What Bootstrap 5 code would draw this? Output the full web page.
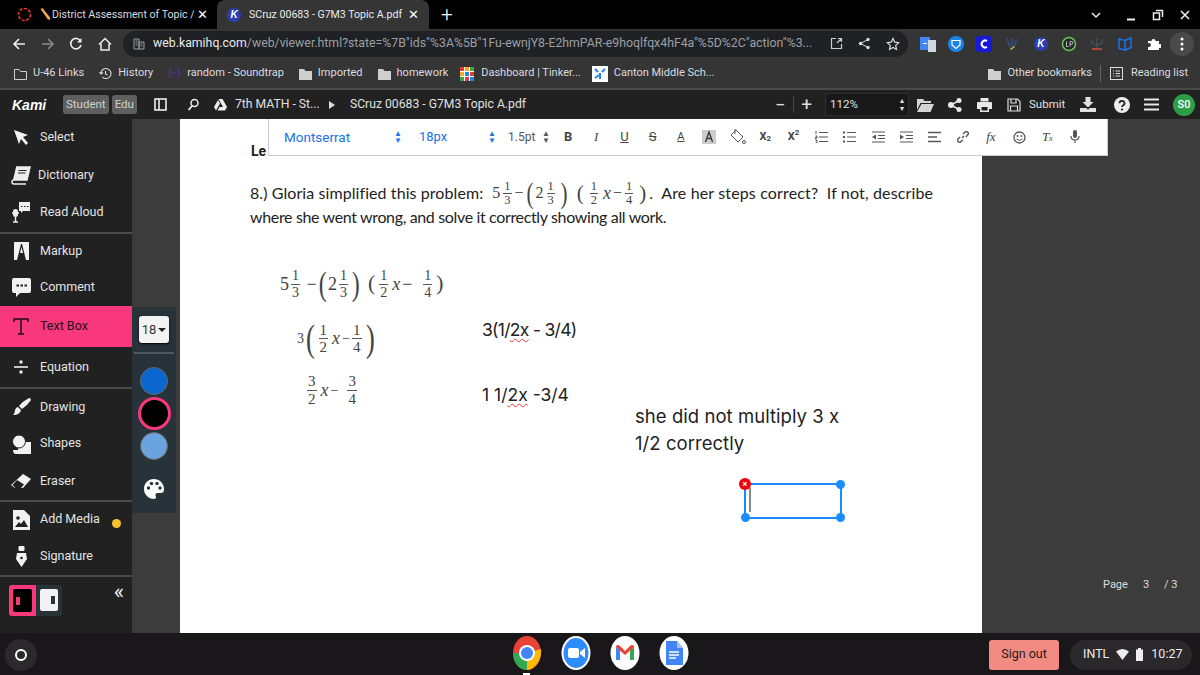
<!DOCTYPE html>
<html lang="en">
<head>
  <meta charset="UTF-8">
  <title>SCruz 00683 - G7M3 Topic A.pdf</title>
  <link rel="stylesheet" href="https://cdn.jsdelivr.net/npm/bootstrap@5.3.3/dist/css/bootstrap.min.css">
  <style>
    html, body { width: 1200px; height: 675px; overflow: hidden; margin: 0; background: #000; }
    body { font-family: Roboto, "Liberation Sans", sans-serif; }
    svg { display: block; flex: none; }

    /* small left margins for the icon rows */
    .ml-5 { margin-left: 5px; } .ml-7 { margin-left: 7px; } .ml-8 { margin-left: 8px; } .ml-9 { margin-left: 9px; }
    .ml-10 { margin-left: 10px; } .ml-12 { margin-left: 12px; } .ml-14 { margin-left: 14px; } .ml-15 { margin-left: 15px; }
    .ml-18 { margin-left: 18px; } .ml-20 { margin-left: 20px; }

    /* tab strip */
    .tabstrip { height: 29px; background: #000; color: #dadce0; font-size: 10.600px; }
    .tab-off { width: 217px; padding-left: 17px; }
    .tab-on { width: 212px; height: 29px; padding-left: 10px; background: #353535; border-radius: 8px 8px 0 0; color: #e8eaed; }
    .tab-close { color: #fff; font-size: 13px; line-height: 1; }
    .tab-off .tab-close { margin-left: auto; margin-right: 9px; }
    .tab-title { white-space: nowrap; overflow: hidden; flex: none; }
    .title-off { width: 142px; margin-left: 1px; }
    .title-on { width: 154px; margin-left: 8px; margin-right: 5px; }
    .k-dot { width: 14px; height: 14px; border-radius: 50%; background: #2b3fb0; color: #fff; font: italic 700 10px/14px "Liberation Sans", sans-serif; text-align: center; flex: none; }
    .new-tab { color: #fff; font-size: 21px; font-weight: 300; line-height: 1; margin-left: 12px; }
    .win-btns { margin-left: auto; padding-right: 9px; gap: 15px; }

    /* address bar */
    .omnibar { height: 29px; background: #353535; padding-left: 12px; }
    .nav-icons { width: 111px; gap: 14.500px; }
    .addr { width: 785px; height: 26px; background: #202124; border-radius: 13px; padding: 0 8px 0 10px; font-size: 12.300px; color: #9aa0a6; white-space: nowrap; }
    .addr b { font-weight: 400; color: #e8eaed; }
    .addr-text { width: 664px; overflow: hidden; margin-left: 8px; }
    .ext-icons { margin-left: 6px; flex: 1; }
    .ext-slot { width: 28.200px; display: flex; justify-content: center; align-items: center; height: 24px; }
    .dots-round { width: 24px; height: 24px; border-radius: 50%; background: #4a4a4a; }

    /* bookmarks */
    .bookmarks { height: 32px; padding: 1px 12px 0 14px; background: #353535; border-bottom: 2px solid #4a4a4a; color: #dadce0; font-size: 11px; white-space: nowrap; }
    .bm-item { display: flex; align-items: center; gap: 6px; margin-right: 15px; }
    .bm-item.before-tight { margin-right: 12px; }
    .bm-item.tight { margin-right: 11px; gap: 7px; }
    .bm-end { margin-left: auto; margin-right: 0; }
    .bm-sep { width: 1px; height: 17px; background: #666; margin: 0 9px 0 8px; }
    .sound-ico { color: #5a2ca0; font-size: 11px; font-weight: 700; width: 13px; }

    /* kami top bar */
    .kamibar { height: 29px; background: #212121; color: #e0e0e0; font-size: 12.200px; white-space: nowrap; position: relative; z-index: 3; }
    .kami-logo { width: 63px; padding-left: 12px; font: italic 700 14px "Liberation Sans", sans-serif; color: #fff; }
    .plan-tag { background: #5f5f5f; color: #d0d0d0; border-radius: 3px; font-size: 11.500px; padding: 2px 3px; line-height: 15px; margin-right: 3px; }
    .crumb { margin-left: 8px; width: 85px; }
    .crumb-arrow { margin-left: 9px; }
    .kami-right { margin-left: auto; padding-right: 5px; }
    .zoom-minus { font-size: 18px; line-height: 1; margin-right: 8px; }
    .zoom-sep { width: 1px; height: 17px; background: #444; margin-right: 7px; }
    .zoom-plus { font-size: 19px; line-height: 1; margin-right: 13px; }
    .zoom-box { width: 84px; height: 23px; background: #191919; border: 1px solid #2e2e2e; padding: 0 4px; font-size: 11.500px; }
    .spin { font-size: 8px; line-height: .9; text-align: center; }
    .submit-lbl { margin-left: 8px; font-size: 11.500px; width: 46px; }
    .avatar { width: 22px; height: 22px; border-radius: 50%; background: #2e9e46; color: #fff; font-size: 11px; font-weight: 500; text-align: center; line-height: 22px; margin-left: 14px; }

    /* tool rail */
    .workarea { height: 514px; position: relative; background: #3c3c3c; }
    .tool-rail { width: 132px; background: #212121; color: #e4e4e4; font-size: 12.500px; flex: none; }
    .tool-row { height: 37.500px; display: flex; align-items: center; position: relative; }
    .tool-ico { width: 40px; display: flex; justify-content: center; padding-left: 2px; }
    .tool-row.on { height: 41px; background: #f8387a; color: #26111a; }
    .tool-row.eq { height: 40px; }
    .tool-row.markup-row { height: 37px; }
    .tool-row.draw { height: 38px; }
    .tool-row.media { height: 37px; }
    .tool-row.sign { height: 38px; }
    .tool-line { border-top: 2px solid #4c4c4c; }
    .dict-lbl { margin-left: -2px; }
    .media-dot { position: absolute; left: 112px; top: 17px; width: 9px; height: 9px; border-radius: 50%; background: #fbc02d; }
    .rail-foot { padding: 8px 8px 0 9px; }
    .view-tog { width: 53px; height: 31px; background: #283339; border-radius: 3px; }
    .view-a { width: 27px; height: 31px; background: #f8387a; padding: 4px; border-radius: 3px 0 0 3px; }
    .view-a i { display: flex; align-items: center; width: 100%; height: 100%; background: #000; border-radius: 2px; padding-left: 3px; }
    .view-a i::before { content: ""; width: 4px; height: 8px; background: #f8387a; }
    .view-b { width: 18px; height: 22px; margin: 4px 0 0 4px; background: #f2f2f2; border-radius: 2px; display: flex; align-items: center; justify-content: flex-end; padding-right: 3px; }
    .view-b::before { content: ""; width: 4px; height: 8px; background: #283339; }
    .collapse-arrows { color: #eee; font-size: 22px; line-height: 1; margin: -4px 0 0 auto; }

    /* colour panel */
    .color-panel { width: 44px; height: 206px; margin-top: 188px; background: #283339; flex: none; }
    .size-pick { width: 30px; height: 27px; margin: 9px auto 0; background: #f3f3f3; border-radius: 3px; color: #333; font-size: 13px; gap: 2px; box-shadow: 0 1px 2px #000; }
    .size-pick::after { content: ""; border: 4px solid transparent; border-top: 4px solid #222; border-bottom: 0; }
    .panel-sep { height: 2px; background: #4e5a60; margin: 9px 2px 13px; }
    .swatch { width: 28px; height: 28px; border-radius: 50%; border: 1px solid #666; margin: 0 auto 4px; }
    .swatch-sel { width: 33px; height: 33px; background: #000; border: 3px solid #f8387a; margin-bottom: 2px; margin-top: -2px; }
    .sw-blue { background: #0b66d0; }
    .sw-light { background: #6aa3e0; }
    .palette-ico { margin: 19px auto 0; }

    /* pdf page, free canvas */
    .pdf-page { width: 802px; margin-left: 4px; background: #fff; position: relative; color: #222; flex: none; }
    .side-right { flex: 1; color: #ddd; font-size: 11px; position: relative; }
    .page-count { position: absolute; top: 458px; left: 121px; display: flex; gap: 15px; }

    .fmt-bar { position: absolute; left: 88px; top: 0; width: 840px; height: 37px; background: #fff; border: 1px solid #ccc; border-top: 0; color: #555; font-size: 12px; z-index: 2; padding-left: 15px; }
    .fmt-pick { color: #1a73e8; font-size: 13.500px; }
    .fmt-pick.spin { font-size: 8px; }
    .w-font { width: 110px; }
    .w-a1 { width: 25px; }
    .w-size { width: 69px; font-size: 13px; }
    .w-a2 { width: 20px; }
    .w-pt { width: 34px; }
    .w-a3 { width: 12px; }
    .fmt-btn { width: 28.200px; display: flex; justify-content: center; align-items: center; font-size: 13px; color: #444; flex: none; }
    .f-b { font-weight: 700; }
    .f-serif { font-family: "Liberation Serif", serif; font-style: italic; }
    .f-sm { font-size: 11px; }
    .f-smb { font-size: 11px; font-weight: 700; }
    .f-sub { font-size: 8px; }

    .note { position: absolute; white-space: nowrap; }
    .note-text { font-family: Inter, "Open Sans", sans-serif; font-size: 17.500px; color: #222; line-height: 27px; }
    .spell { text-decoration: underline wavy #e33 1px; text-underline-offset: 2px; }
    .q-text { font-family: Lato, "Open Sans", sans-serif; font-size: 16px; line-height: 24px; color: #222; }
    .q1 { left: 70px; top: 62px; display: flex; align-items: center; letter-spacing: .08px; }
    .q2 { left: 70px; top: 86px; letter-spacing: -.35px; }
    .q-math { color: #222; margin: 0 0 0 9px; font-size: 20px; letter-spacing: 0; height: 24px; }
    .q-math .frac { font-size: 12.500px; line-height: 1; margin: 0 3px; }
    .q-math .paren { font-size: 30px; margin: 0 1px; }
    .q-math .paren-s { font-size: 21px; margin: 0 3px; }
    .q-after { letter-spacing: .15px; white-space: pre; }
    .le { left: 71px; top: 22px; font-weight: 700; font-size: 14px; color: #222; }

    .math { font-family: "Liberation Serif", serif; color: #444; display: inline-flex; align-items: center; font-size: 16px; }
    .math em { font-size: 18px; margin: 0 2px; }
    .frac { display: inline-flex; flex-direction: column; align-items: center; font-size: .78em; line-height: 1.120; margin: 0 2px; }
    .frac > span:first-child { border-bottom: 1px solid #555; padding: 0 1px; }
    .frac-big { font-size: 15px; }
    .paren { font-size: 1.900em; font-weight: 300; line-height: 1; transform: scaleX(.7); }
    .paren-s { font-size: 1.200em; line-height: 1; margin: 0 2px; }
    .paren-xl { font-size: 2.700em; }
    .m1 { left: 100px; top: 148px; font-size: 18px; }
    .m2 { left: 117px; top: 201px; font-size: 14px; }
    .m3 { left: 125px; top: 254px; font-size: 14px; }
    .n1 { left: 302px; top: 197px; letter-spacing: -.7px; }
    .n2 { left: 302px; top: 262px; }
    .n3 { left: 455px; top: 284px; font-size: 18.500px; letter-spacing: .05px; }

    .sel-box { left: 564px; top: 364px; width: 98px; height: 36px; border: 2px solid #1a8cff; }
    .sel-h { position: absolute; width: 9px; height: 9px; background: #1a8cff; border-radius: 50%; }
    .h-tr { right: -5px; top: -5px; }
    .h-bl { left: -5px; bottom: -5px; }
    .h-br { right: -5px; bottom: -5px; }
    .sel-x { position: absolute; left: -7px; top: -7px; width: 12px; height: 12px; border-radius: 50%; background: #f3000f; color: #fff; font-size: 9px; line-height: 12px; text-align: center; font-weight: 700; }
    .caret-line { position: absolute; left: 3px; top: 2px; width: 2px; height: 25px; background: #888; }

    /* shelf */
    .shelf { height: 43px; background: #1a171a; position: relative; color: #e8eaed; font-size: 12.500px; }
    .launcher { width: 32px; height: 32px; border-radius: 50%; background: #2c292c; margin-left: 5px; flex: none; }
    .launcher::after { content: ""; width: 12px; height: 12px; border: 2px solid #fff; border-radius: 50%; }
    .shelf-apps { position: absolute; left: 507px; top: 2px; gap: 9px; }
    .shelf-ico { width: 40px; display: flex; justify-content: center; }
    .run-dot { position: absolute; left: 16px; top: 38px; width: 7px; height: 2px; background: #fff; }
    .sign-out { width: 70px; height: 30px; background: #f28b82; color: #2a1a1a; border-radius: 3px; margin-left: auto; }
    .tray { width: 122px; height: 30px; background: #2b282b; border-radius: 15px; margin: 0 8px 0 11px; padding-left: 13px; gap: 7px; }
    .tray-time { margin-left: 1px; }
  </style>
</head>
<body>
  <!-- tab strip -->
  <div class="tabstrip d-flex align-items-center">
    <div class="tab-off d-flex align-items-center">
      <svg width="15" height="15" viewBox="0 0 15 15"><circle cx="7.500" cy="7.500" r="6" fill="none" stroke="#e53935" stroke-width="1.600" stroke-dasharray="3 1.500"/></svg>
      <svg width="12" height="12" viewBox="0 0 11 12" class="ml-7"><path d="M1 1l2-1 8 10-1 2-2-1z" fill="#e7a94b"/></svg>
      <span class="tab-title title-off">District Assessment of Topic /</span>
      <span class="tab-close">✕</span>
    </div>
    <div class="tab-on d-flex align-items-center">
      <span class="k-dot">K</span>
      <span class="tab-title title-on">SCruz 00683 - G7M3 Topic A.pdf</span>
      <span class="tab-close">✕</span>
    </div>
    <span class="new-tab">+</span>
    <div class="win-btns d-flex align-items-center">
      <svg width="12" height="12" viewBox="0 0 12 12"><path d="M2 4l4 4 4-4" fill="none" stroke="#eee" stroke-width="1.500"/></svg>
      <svg width="12" height="12" viewBox="0 0 12 12" class="ms-2"><path d="M2 10.500h8" stroke="#eee" stroke-width="2"/></svg>
      <svg width="12" height="12" viewBox="0 0 12 12"><path d="M1.500 4h6v6.500h-6zM4 1.500h6.500V8" fill="none" stroke="#eee" stroke-width="1.500"/></svg>
      <svg width="12" height="12" viewBox="0 0 12 12"><path d="M2 2l8 8M10 2l-8 8" stroke="#eee" stroke-width="1.600"/></svg>
    </div>
  </div>

  <!-- address bar -->
  <div class="omnibar d-flex align-items-center">
    <div class="nav-icons d-flex align-items-center">
      <svg width="14" height="14" viewBox="0 0 14 14"><path d="M13 7H2M7 2L2 7l5 5" fill="none" stroke="#eee" stroke-width="1.600"/></svg>
      <svg width="14" height="14" viewBox="0 0 14 14"><path d="M1 7h11M7 2l5 5-5 5" fill="none" stroke="#8a8a8a" stroke-width="1.600"/></svg>
      <svg width="14" height="14" viewBox="0 0 14 14"><path d="M11.500 4A5.200 5.200 0 1 0 12 8" fill="none" stroke="#eee" stroke-width="1.600"/><path d="M12.500 1v4.500H8z" fill="#eee"/></svg>
      <svg width="14" height="14" viewBox="0 0 14 14"><path d="M1 7.500L7 1.500l6 6M3 6.500V13h8V6.500" fill="none" stroke="#eee" stroke-width="1.500"/></svg>
    </div>
    <div class="addr d-flex align-items-center">
      <svg width="12" height="12" viewBox="0 0 12 12"><path d="M1 1h5v10H1zM6 4h5v7H6z" fill="none" stroke="#9aa0a6"/><path d="M2.500 3h2M2.500 5h2M2.500 7h2M7.500 6h2M7.500 8h2" stroke="#9aa0a6"/></svg>
      <span class="addr-text"><b>web.kamihq.com</b>/web/viewer.html?state=%7B"ids"%3A%5B"1Fu-ewnjY8-E2hmPAR-e9hoqlfqx4hF4a"%5D%2C"action"%3...</span>
      <svg width="13" height="13" viewBox="0 0 13 13" class="ms-auto"><path d="M6 1.500H1.500v10h10V7M7 6l4.500-4.500M8 1.500h3.500V5" fill="none" stroke="#ccc" stroke-width="1.200"/></svg>
      <svg width="13" height="13" viewBox="0 0 13 13" class="ml-15"><circle cx="10" cy="2.500" r="1.700" fill="#ddd"/><circle cx="10" cy="10.500" r="1.700" fill="#ddd"/><circle cx="2.500" cy="6.500" r="1.700" fill="#ddd"/><path d="M10 2.500l-7.500 4 7.500 4" fill="none" stroke="#ddd"/></svg>
      <svg width="14" height="14" viewBox="0 0 14 14" class="ml-15"><path d="M7 1.500l1.700 3.700 4 .5-3 2.700.8 4L7 10.400l-3.500 2 .8-4-3-2.700 4-.5z" fill="none" stroke="#ddd" stroke-width="1.200"/></svg>
    </div>
    <div class="ext-icons d-flex align-items-center">
      <span class="ext-slot"><svg width="16" height="16" viewBox="0 0 16 16"><rect x="0" y="1" width="10" height="13" fill="#4285f4"/><rect x="8" y="4" width="8" height="12" fill="#cfd8dc"/><path d="M3 7.500h4" stroke="#fff"/></svg></span>
      <span class="ext-slot"><svg width="16" height="16" viewBox="0 0 16 16"><circle cx="8" cy="8" r="8" fill="#1a84e8"/><path d="M4 4.500h8V9l-4 3.500L4 9z" fill="none" stroke="#fff" stroke-width="1.200"/></svg></span>
      <span class="ext-slot"><svg width="16" height="16" viewBox="0 0 16 16"><rect width="16" height="16" rx="3" fill="#1818d8"/><path d="M11 5a3.500 3.500 0 1 0 0 6" fill="none" stroke="#fff" stroke-width="2"/></svg></span>
      <span class="ext-slot"><svg width="16" height="16" viewBox="0 0 16 16"><path d="M2 2l3 10M7 2v9M12 3l-3 7" stroke="#34508a" stroke-width="1.400"/><path d="M5 13l4-3 1 1-4 3z" fill="#d5b13a"/></svg></span>
      <span class="ext-slot"><span class="k-dot">K</span></span>
      <span class="ext-slot"><svg width="16" height="16" viewBox="0 0 16 16"><circle cx="8" cy="8" r="6.500" fill="#26292c" stroke="#6bbf59" stroke-width="1.500"/><path d="M5.500 5.500v5h2M9 10.500v-5h1.500a1.300 1.300 0 0 1 0 2.800H9" fill="none" stroke="#ddd" stroke-width=".8"/></svg></span>
      <span class="ext-slot"><svg width="16" height="16" viewBox="0 0 16 16"><path d="M3 3v4q5 4 10 0V3M8 2v10" fill="none" stroke="#46525c" stroke-width="1.300"/><path d="M3 13h10" stroke="#a34a3a" stroke-width="2"/></svg></span>
      <span class="ext-slot"><svg width="16" height="16" viewBox="0 0 16 16"><path d="M2 3l6 1.500V14l-6-1.500zM14 2l-6 2.500V14l6-2.500z" fill="none" stroke="#1a73e8" stroke-width="1.500"/></svg></span>
      <span class="ext-slot"><svg width="14" height="14" viewBox="0 0 14 14"><path d="M1 4h3.500a2 2 0 1 1 4 0H12v3.200a2 2 0 1 1 0 3.600V13H1V9.800a2 2 0 1 0 0-3.600z" fill="#fff"/></svg></span>
      <span class="ext-slot"><span class="dots-round d-flex align-items-center justify-content-center"><svg width="4" height="14" viewBox="0 0 4 14"><circle cx="2" cy="2" r="1.500" fill="#fff"/><circle cx="2" cy="7" r="1.500" fill="#fff"/><circle cx="2" cy="12" r="1.500" fill="#fff"/></svg></span></span>
    </div>
  </div>

  <!-- bookmarks -->
  <svg width="0" height="0" class="position-absolute"><symbol id="fold" viewBox="0 0 13 12"><path d="M0 1h5l1.500 2H13v9H0z" fill="#cfcfcf"/></symbol></svg>
  <div class="bookmarks d-flex align-items-center">
    <span class="bm-item"><svg width="13" height="12" viewBox="0 0 13 12"><path d="M.5 1.500h4.500l1.500 2h6v8H.5z" fill="none" stroke="#cfcfcf"/></svg>U-46 Links</span>
    <span class="bm-item"><svg width="13" height="13" viewBox="0 0 13 13"><path d="M2 6.500a5 5 0 1 1 1.500 3.600M.5 5l1.500 2 2-1.500M6.500 4v3l2 1" fill="none" stroke="#ddd" stroke-width="1.100"/></svg>History</span>
    <span class="bm-item"><span class="sound-ico">(-)</span>random - Soundtrap</span>
    <span class="bm-item"><svg width="13" height="12"><use href="#fold"/></svg>Imported</span>
    <span class="bm-item before-tight"><svg width="13" height="12"><use href="#fold"/></svg>homework</span>
    <span class="bm-item tight"><svg width="14" height="14" viewBox="0 0 14 14"><rect width="14" height="14" fill="#fff"/><rect x="0" y="0" width="4" height="4" fill="#e53935"/><rect x="5" y="0" width="4" height="4" fill="#f9a825"/><rect x="10" y="0" width="4" height="4" fill="#43a047"/><rect x="0" y="5" width="4" height="4" fill="#f9a825"/><rect x="5" y="5" width="4" height="4" fill="#1e88e5"/><rect x="10" y="5" width="4" height="4" fill="#e53935"/><rect x="0" y="10" width="4" height="4" fill="#43a047"/><rect x="5" y="10" width="4" height="4" fill="#e53935"/><rect x="10" y="10" width="4" height="4" fill="#1e88e5"/></svg>Dashboard | Tinker...</span>
    <span class="bm-item"><svg width="16" height="16" viewBox="0 0 16 16"><rect width="16" height="16" fill="#fff"/><path d="M3 3l3 3M13 3l-3 3M8 7v6M3 12l4-3" stroke="#1e88e5" stroke-width="2"/></svg>Canton Middle Sch...</span>
    <span class="bm-item bm-end"><svg width="13" height="12"><use href="#fold"/></svg>Other bookmarks</span>
    <span class="bm-sep"></span>
    <span class="d-flex align-items-center gap-2"><svg width="13" height="13" viewBox="0 0 13 13"><rect x=".5" y=".5" width="12" height="12" fill="none" stroke="#ddd"/><path d="M3 4h1M5.500 4H10M3 6.500h1M5.500 6.500H10M3 9h1M5.500 9H10" stroke="#ddd"/></svg>Reading list</span>
  </div>

  <!-- kami top bar -->
  <div class="kamibar d-flex align-items-center">
    <span class="kami-logo">Kami</span>
    <span class="plan-tag">Student</span><span class="plan-tag">Edu</span>
    <svg width="13" height="13" viewBox="0 0 13 13" class="ml-14"><rect x="1" y="1" width="11" height="11" fill="none" stroke="#eee" stroke-width="1.600"/><path d="M5 1v11" stroke="#eee" stroke-width="1.600"/></svg>
    <svg width="13" height="13" viewBox="0 0 13 13" class="ml-20"><circle cx="7.500" cy="5" r="3.500" fill="none" stroke="#eee" stroke-width="1.500"/><path d="M5 8l-3.500 4" stroke="#eee" stroke-width="1.800"/></svg>
    <svg width="13" height="12" viewBox="0 0 13 12" class="ml-14"><path d="M4.500 0h4l4.500 8h-4zM4 1L0 8l2 3.500 4-7zM3.500 11.500l2-3.500H13l-2 3.500z" fill="#eee"/></svg>
    <span class="crumb">7th MATH - St...</span>
    <svg width="6" height="8" viewBox="0 0 6 8" class="crumb-arrow"><path d="M0 0l6 4-6 4z" fill="#ddd"/></svg>
    <span class="ml-15">SCruz 00683 - G7M3 Topic A.pdf</span>
    <div class="kami-right d-flex align-items-center">
      <span class="zoom-minus">−</span>
      <span class="zoom-sep"></span>
      <span class="zoom-plus">+</span>
      <span class="zoom-box d-flex align-items-center justify-content-between">112%<span class="spin">▴<br>▾</span></span>
      <svg width="17" height="14" viewBox="0 0 17 14" class="ml-8"><path d="M0 1h6l1.500 2H14v2H3.500L0 12z M4.500 6H17l-3.500 8H0z" fill="#d5d5d5"/></svg>
      <svg width="14" height="14" viewBox="0 0 14 14" class="ml-14"><circle cx="11" cy="2.500" r="2.500" fill="#e8e8e8"/><circle cx="11" cy="11.500" r="2.500" fill="#e8e8e8"/><circle cx="3" cy="7" r="3" fill="#e8e8e8"/><path d="M11 2.500L3 7l8 4.500" fill="none" stroke="#e8e8e8" stroke-width="1.500"/></svg>
      <svg width="15" height="14" viewBox="0 0 15 14" class="ml-15"><path d="M3.500 0h8v3.500h-8zM0 5q0-1 1-1h13q1 0 1 1v6h-3v3H3v-3H0z" fill="#e8e8e8"/><rect x="4.500" y="9" width="6" height="3.500" fill="#212121"/></svg>
      <svg width="14" height="14" viewBox="0 0 14 14" class="ml-15"><path d="M1 1h9.500L13 3.500V13H1zM4 1v4h5V1M3.500 13V8h7v5" fill="none" stroke="#ddd" stroke-width="1.200"/></svg>
      <span class="submit-lbl">Submit</span>
      <svg width="16" height="15" viewBox="0 0 16 15" class="ml-5"><path d="M5.500 0h5v5h3L8 10.500 2.500 5h3zM0 11h6l2 1.500 2-1.500h6v4H0z" fill="#e0e0e0"/></svg>
      <svg width="16" height="16" viewBox="0 0 16 16" class="ml-18"><circle cx="8" cy="8" r="8" fill="#eee"/><path d="M5.500 6.200a2.500 2.300 0 1 1 3.700 2C8.400 8.700 8 9 8 10" fill="none" stroke="#212121" stroke-width="1.800"/><circle cx="8" cy="12.500" r="1.100" fill="#212121"/></svg>
      <svg width="15" height="13" viewBox="0 0 15 13" class="ml-14"><path d="M0 1.500h15M0 6.500h15M0 11.500h15" stroke="#e8e8e8" stroke-width="2"/></svg>
      <span class="avatar">S0</span>
    </div>
  </div>

  <!-- main area -->
  <div class="workarea d-flex">
    <div class="tool-rail">
      <div class="tool-row"><span class="tool-ico"><svg width="15" height="15" viewBox="0 0 15 15"><path d="M0 0l14 5-5 2 5 6-2 2-5-6-2 5z" fill="#f2f2f2"/></svg></span>Select</div>
      <div class="tool-row"><span class="tool-ico"><svg width="20" height="20" viewBox="0 0 20 20"><path d="M5 2h14l-3 13H3q-2 0-2 2t2 2h12" fill="none" stroke="#eee" stroke-width="1.500"/><path d="M5 2h14l-3 13H2z" fill="#eee"/><path d="M7.500 5.500h8M7 8h7.500" stroke="#212121" stroke-width="1.200"/></svg></span><span class="dict-lbl">Dictionary</span></div>
      <div class="tool-row"><span class="tool-ico"><svg width="18" height="21" viewBox="0 0 18 21"><path d="M7 0h11v9H11l-2 2V9H7z" fill="#eee"/><rect x="1" y="7" width="5" height="8" rx="2.500" fill="#eee"/><path d="M0 11h7M3.500 15v5M1 20h5" stroke="#eee" stroke-width="1.400"/><path d="M9 4.500h1.500M12 4.500h1.500M15 4.500h1.500" stroke="#212121" stroke-width="1.200"/></svg></span>Read Aloud</div>
      <div class="tool-row markup-row tool-line"><span class="tool-ico"><svg width="15" height="18" viewBox="0 0 15 18"><path d="M0 0h15v18H0z" fill="#f2f2f2"/><path d="M5 10L7 2h1l2 8 2 8H3z" fill="#212121"/><path d="M6 11l1.500-6 1.500 6z" fill="#f2f2f2"/></svg></span>Markup</div>
      <div class="tool-row"><span class="tool-ico"><svg width="19" height="19" viewBox="0 0 19 19"><path d="M2 0h15q2 0 2 2v11q0 2-2 2H8l-4 4v-4H2q-2 0-2-2V2q0-2 2-2z" fill="#f2f2f2"/><path d="M4.500 7.500h2.500M8.500 7.500H11M12.500 7.500H15" stroke="#212121" stroke-width="2"/></svg></span>Comment</div>
      <div class="tool-row on"><span class="tool-ico"><svg width="16" height="17" viewBox="0 0 16 17"><path d="M1 4V1h14v3M8 1v15M5 16h6" fill="none" stroke="#1d0b12" stroke-width="1.500"/></svg></span>Text Box</div>
      <div class="tool-row eq"><span class="tool-ico"><svg width="14" height="14" viewBox="0 0 14 14"><circle cx="7" cy="2" r="1.700" fill="#eee"/><circle cx="7" cy="12" r="1.700" fill="#eee"/><path d="M0 7h14" stroke="#eee" stroke-width="1.600"/></svg></span>Equation</div>
      <div class="tool-row draw tool-line"><span class="tool-ico"><svg width="19" height="18" viewBox="0 0 19 18"><path d="M17 0q2 0 2 2-4 6-9 9L7 8q4-5 10-8zM6 9l3 3q-1 5-8 5 2-2 2-5 1-3 3-3z" fill="#f2f2f2"/></svg></span>Drawing</div>
      <div class="tool-row"><span class="tool-ico"><svg width="20" height="20" viewBox="0 0 20 20"><path d="M7 8h13v12H5q-3 0-3-4h5z" fill="#f2f2f2"/><circle cx="8" cy="7.500" r="6.500" fill="#f2f2f2" stroke="#212121"/></svg></span>Shapes</div>
      <div class="tool-row"><span class="tool-ico"><svg width="20" height="15" viewBox="0 0 20 15"><path d="M12 0l8 5-8 9H4L0 11z" fill="#f2f2f2"/><path d="M6 6l7 4.500-3 3.500H4.500L1.500 11z" fill="#212121"/></svg></span>Eraser</div>
      <div class="tool-row media tool-line"><span class="tool-ico"><svg width="17" height="20" viewBox="0 0 17 20"><path d="M0 0h11l6 6v14H0z" fill="#f2f2f2"/><circle cx="5" cy="8" r="1.800" fill="#212121"/><path d="M2 17l4-5 2 2 3-4 4 7z" fill="#212121"/></svg></span>Add Media<span class="media-dot"></span></div>
      <div class="tool-row sign"><span class="tool-ico"><svg width="11" height="21" viewBox="0 0 11 21"><rect x="2.500" y="0" width="6" height="5" rx="1" fill="#f2f2f2"/><path d="M1 7h9l1 6-5.500 8L0 13z" fill="#f2f2f2"/><circle cx="5.500" cy="12" r="1.300" fill="#212121"/></svg></span>Signature</div>
      <div class="tool-line rail-foot d-flex align-items-start">
        <div class="view-tog d-flex">
          <span class="view-a"><i></i></span>
          <span class="view-b"></span>
        </div>
        <span class="collapse-arrows">«</span>
      </div>
    </div>

    <div class="color-panel">
      <div class="size-pick d-flex align-items-center justify-content-center">18</div>
      <div class="panel-sep"></div>
      <div class="swatch sw-blue"></div>
      <div class="swatch swatch-sel"></div>
      <div class="swatch sw-light"></div>
      <svg width="20" height="20" viewBox="0 0 20 20" class="palette-ico"><path d="M10 0C4 0 0 4.500 0 10s4.500 10 10 10c2 0 2.500-1.500 1.700-3-.8-1.800.3-3 2-3H17c2 0 3-1.500 3-4 0-6-5-10-10-10z" fill="#fff"/><circle cx="4.500" cy="9" r="1.700" fill="#283339"/><circle cx="7.500" cy="4.500" r="1.700" fill="#283339"/><circle cx="13" cy="4.500" r="1.700" fill="#283339"/><circle cx="16" cy="9" r="1.700" fill="#283339"/></svg>
    </div>

    <div class="pdf-page">
      <div class="fmt-bar d-flex align-items-center">
        <span class="fmt-pick w-font">Montserrat</span>
        <span class="fmt-pick spin w-a1 text-start">▲<br>▼</span>
        <span class="fmt-pick w-size">18px</span>
        <span class="fmt-pick spin w-a2 text-start">▲<br>▼</span>
        <span class="w-pt">1.5pt</span>
        <span class="spin w-a3 text-start">▲<br>▼</span>
        <span class="fmt-btn f-b">B</span>
        <span class="fmt-btn f-serif">I</span>
        <span class="fmt-btn text-decoration-underline">U</span>
        <span class="fmt-btn text-decoration-line-through">S</span>
        <span class="fmt-btn f-sm text-decoration-underline">A</span>
        <span class="fmt-btn"><svg width="14" height="14" viewBox="0 0 14 14"><rect width="14" height="14" fill="#ccc"/><path d="M3.500 12L7 2l3.500 10M5 8.500h4" fill="none" stroke="#333" stroke-width="1.300"/></svg></span>
        <span class="fmt-btn"><svg width="17" height="16" viewBox="0 0 17 16"><path d="M7 1l7 7-5 5-7-7zM6 0v5" fill="none" stroke="#555"/><circle cx="15" cy="13" r="1.500" fill="none" stroke="#555"/></svg></span>
        <span class="fmt-btn f-smb">X<sub class="f-sub">2</sub></span>
        <span class="fmt-btn f-smb">X<sup class="f-sub">2</sup></span>
        <span class="fmt-btn"><svg width="13" height="12" viewBox="0 0 13 12"><path d="M4 1.500h9M4 6h9M4 10.500h9M1 0v3M.5 5H2v1.500H.5V8H2M.5 9.500H2V12H.5" fill="none" stroke="#555"/></svg></span>
        <span class="fmt-btn"><svg width="13" height="12" viewBox="0 0 13 12"><path d="M4 1.500h9M4 6h9M4 10.500h9" stroke="#555"/><path d="M0 1.500h2M0 6h2M0 10.500h2" stroke="#555" stroke-width="2"/></svg></span>
        <span class="fmt-btn"><svg width="13" height="12" viewBox="0 0 13 12"><path d="M0 1h13M6 4.500h7M6 7.500h7M0 11h13" stroke="#555"/><path d="M4 3.500v5L0 6z" fill="#555"/></svg></span>
        <span class="fmt-btn"><svg width="13" height="12" viewBox="0 0 13 12"><path d="M0 1h13M6 4.500h7M6 7.500h7M0 11h13" stroke="#555"/><path d="M0 3.500v5L4 6z" fill="#555"/></svg></span>
        <span class="fmt-btn"><svg width="13" height="12" viewBox="0 0 13 12"><path d="M0 1.500h13M0 6h9M0 10.500h13" stroke="#555" stroke-width="1.400"/></svg></span>
        <span class="fmt-btn"><svg width="12" height="12" viewBox="0 0 12 12"><path d="M5 7l2-2M3 6L1 8q-1 2 .5 3T4 10.500L6 9M6 3l2-2q2-1 3 .5T10.500 4L9 6" fill="none" stroke="#555" stroke-width="1.400"/></svg></span>
        <span class="fmt-btn f-serif">fx</span>
        <span class="fmt-btn"><svg width="13" height="13" viewBox="0 0 13 13"><circle cx="6.500" cy="6.500" r="5.500" fill="none" stroke="#555" stroke-width="1.300"/><circle cx="4.500" cy="5" r=".9" fill="#555"/><circle cx="8.500" cy="5" r=".9" fill="#555"/><path d="M3.500 8q3 3 6 0" fill="none" stroke="#555"/></svg></span>
        <span class="fmt-btn f-serif">T<sub class="f-sub">x</sub></span>
        <span class="fmt-btn"><svg width="10" height="14" viewBox="0 0 10 14"><rect x="3" y="0" width="4" height="8" rx="2" fill="#555"/><path d="M1 6q0 4 4 4t4-4M5 10v3" fill="none" stroke="#555" stroke-width="1.200"/></svg></span>
      </div>

      <div class="note le">Le</div>
      <div class="note q-text q1">8.) Gloria simplified this problem:<span class="math q-math">5<span class="frac"><span>1</span><span>3</span></span>− <span class="paren">(</span>2<span class="frac"><span>1</span><span>3</span></span><span class="paren">)</span>&nbsp;<span class="paren-s">(</span><span class="frac"><span>1</span><span>2</span></span><em>x</em> − <span class="frac"><span>1</span><span>4</span></span><span class="paren-s">)</span></span><span class="q-after">.  Are her steps correct?  If not, describe</span></div>
      <div class="note q-text q2">where she went wrong, and solve it correctly showing all work.</div>

      <div class="note math m1">5<span class="frac"><span>1</span><span>3</span></span>&nbsp;− <span class="paren">(</span>2<span class="frac"><span>1</span><span>3</span></span><span class="paren">)</span>&nbsp;<span class="paren-s">(</span><span class="frac"><span>1</span><span>2</span></span><em>x</em> − &nbsp;<span class="frac"><span>1</span><span>4</span></span><span class="paren-s">)</span></div>
      <div class="note math m2">3<span class="paren paren-xl">(</span><span class="frac frac-big"><span>1</span><span>2</span></span><em>x</em> − <span class="frac frac-big"><span>1</span><span>4</span></span><span class="paren paren-xl">)</span></div>
      <div class="note math m3"><span class="frac frac-big"><span>3</span><span>2</span></span><em>x</em> − &nbsp;<span class="frac frac-big"><span>3</span><span>4</span></span></div>

      <div class="note note-text n1">3(1/<span class="spell">2x</span> - 3/4)</div>
      <div class="note note-text n2">1 1/<span class="spell">2x</span> -3/4</div>
      <div class="note note-text n3">she did not multiply 3 x<br>1/2 correctly</div>

      <div class="note sel-box">
        <span class="sel-x">×</span>
        <span class="caret-line"></span>
        <span class="sel-h h-tr"></span>
        <span class="sel-h h-bl"></span>
        <span class="sel-h h-br"></span>
      </div>
    </div>

    <div class="side-right">
      <div class="page-count"><span>Page</span><span>3</span><span>/ 3</span></div>
    </div>
  </div>

  <!-- chromeos shelf -->
  <div class="shelf d-flex align-items-center">
    <span class="launcher d-flex align-items-center justify-content-center"></span>
    <div class="shelf-apps d-flex">
      <span class="shelf-ico position-relative"><svg width="30" height="36" viewBox="0 0 30 36"><ellipse cx="15" cy="18" rx="14" ry="17" fill="#ea4335"/><path d="M15 18L1 18c0 10 6 17 14 17z" fill="#34a853"/><path d="M15 18l14-4c1 8-4 20-14 21z" fill="#fbbc05"/><circle cx="15" cy="18" r="8" fill="#fff"/><circle cx="15" cy="18" r="6" fill="#4285f4"/></svg><span class="run-dot"></span></span>
      <span class="shelf-ico"><svg width="30" height="36" viewBox="0 0 30 36"><ellipse cx="15" cy="18" rx="14.500" ry="17" fill="#fff"/><ellipse cx="15" cy="18" rx="12.500" ry="15" fill="#2d8cff"/><rect x="7" y="13" width="11" height="10" rx="2" fill="#fff"/><path d="M19 17l5-4v10l-5-4z" fill="#fff"/></svg></span>
      <span class="shelf-ico"><svg width="30" height="36" viewBox="0 0 30 36"><ellipse cx="15" cy="18" rx="14.500" ry="17" fill="#fff"/><path d="M6 12v13h4V15z" fill="#4285f4"/><path d="M24 12v13h-4V15z" fill="#34a853"/><path d="M6 12l9 8 9-8v-1q-2-2-4 0l-5 5-5-5q-2-2-4 0z" fill="#ea4335"/></svg></span>
      <span class="shelf-ico"><svg width="30" height="36" viewBox="0 0 30 36"><ellipse cx="15" cy="18" rx="14.500" ry="17" fill="#fff"/><path d="M7 6h11l6 7v17H7z" fill="#4285f4"/><path d="M18 6l6 7h-6z" fill="#a1c2fa"/><path d="M10 17h10M10 20h10M10 23h7" stroke="#fff" stroke-width="1.500"/></svg></span>
    </div>
    <span class="sign-out d-flex align-items-center justify-content-center">Sign out</span>
    <span class="tray d-flex align-items-center">INTL
      <svg width="13" height="11" viewBox="0 0 13 11"><path d="M0 2.500q6.500-5 13 0L6.500 11z" fill="#eee"/></svg>
      <svg width="7" height="13" viewBox="0 0 7 13"><path d="M2 0h3v1.500h2V13H0V1.500h2z" fill="#eee"/></svg>
      <span class="tray-time">10:27</span>
    </span>
  </div>
  <script src="https://cdn.jsdelivr.net/npm/bootstrap@5.3.3/dist/js/bootstrap.bundle.min.js"></script>
</body>
</html>
